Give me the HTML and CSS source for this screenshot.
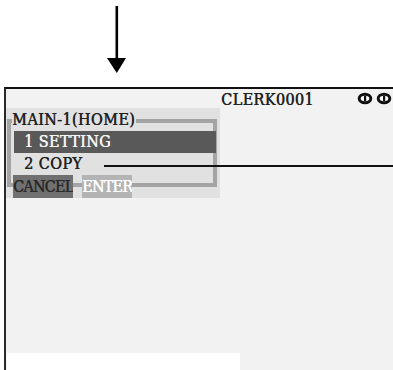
FILE: index.html
```html
<!DOCTYPE html>
<html lang="en">
<head>
  <meta charset="UTF-8" />
  <meta name="viewport" content="width=device-width, initial-scale=1.0"/>
  <title>MAIN-1 (HOME)</title>
  <link rel="stylesheet" href="styles.css">
</head>
<body>
  <div class="pointer">
    <svg width="393" height="87" viewBox="0 0 393 87">
      <rect x="115.5" y="6" width="2.6" height="53" fill="#000"/>
      <polygon points="107,58 126,58 116.8,73" fill="#000"/>
    </svg>
  </div>

  <div class="screen">
    <div class="status">
      <span class="clerk">CLERK0001</span>
      <span class="icons">
        <svg width="36" height="13" viewBox="0 0 36 13">
          <ellipse cx="8" cy="6.5" rx="5.8" ry="4.2" fill="#fff" stroke="#111" stroke-width="3"/>
          <rect x="7" y="4" width="2.2" height="5" fill="#111"/>
          <ellipse cx="27" cy="6.5" rx="5.8" ry="4.2" fill="#fff" stroke="#111" stroke-width="3"/>
          <rect x="26" y="4" width="2.2" height="5" fill="#111"/>
        </svg>
      </span>
    </div>

    <div class="dialog">
      <div class="frame"></div>
      <div class="title"><span>MAIN-1(HOME)</span></div>
      <div class="item selected">1 SETTING</div>
      <div class="item">2 COPY</div>
      <div class="keys">
        <span class="key cancel">CANCEL</span>
        <span class="key enter">ENTER</span>
      </div>
    </div>

    <div class="input-box"></div>
  </div>

  <!-- callout line pointing at the second item -->
  <div class="leader"></div>
</body>
</html>
```

FILE: styles.css
```css
body {
  margin: 0;
  width: 393px;
  height: 370px;
  overflow: hidden;
  position: relative;
  background: #fff;
  font-family: "DejaVu Serif", "Liberation Serif", serif;
  font-stretch: condensed;
  font-size: 16px;
  letter-spacing: 0.4px;
  color: #222;
  text-shadow: 0.5px 0 0 currentColor;
}

.pointer svg {
  display: block;
}

.screen {
  margin-left: 4px;
  height: 281px;
  border-top: 2px solid #111;
  border-left: 2px solid #2a2a2a;
  background: #f2f2f2;
  display: flex;
  flex-direction: column;
}

.status {
  height: 19px;
  display: flex;
  align-items: center;
  gap: 48px;
  padding-left: 215px;
  line-height: 19px;
}

.clerk {
  width: 88px;
  padding-top: 1px;
}

.icons svg {
  display: block;
}

.dialog {
  position: relative;
  width: 214px;
  height: 90px;
  background: #e1e1e1;
}

.frame {
  position: absolute;
  left: 1px;
  top: 11px;
  width: 202px;
  height: 60px;
  border: 4px solid #a4a4a4;
}

.title {
  position: relative;
  height: 23px;
  padding-left: 6px;
  padding-top: 2px;
  box-sizing: border-box;
  line-height: 20px;
}

.title span {
  background: #e1e1e1;
  padding-right: 1px;
}

.item {
  position: relative;
  height: 22px;
  line-height: 22px;
  margin: 0 4px 0 8px;
  padding-left: 10px;
}

.item.selected {
  background: #595959;
  color: #f4f4f4;
}

.keys {
  position: relative;
  display: flex;
  gap: 9px;
  padding-left: 7px;
}

.key {
  height: 23px;
  line-height: 23px;
  text-align: center;
  letter-spacing: -0.8px;
  white-space: nowrap;
  overflow: hidden;
}

.key.cancel {
  width: 60px;
  background: #707070;
  color: #2a2a2a;
}

.key.enter {
  width: 50px;
  background: #b4b4b4;
  color: #fff;
}

.input-box {
  margin-top: auto;
  margin-left: 1px;
  width: 233px;
  height: 17px;
  background: #fff;
}

.leader {
  position: absolute;
  left: 104px;
  top: 165px;
  width: 289px;
  height: 2px;
  background: #111;
}
```
